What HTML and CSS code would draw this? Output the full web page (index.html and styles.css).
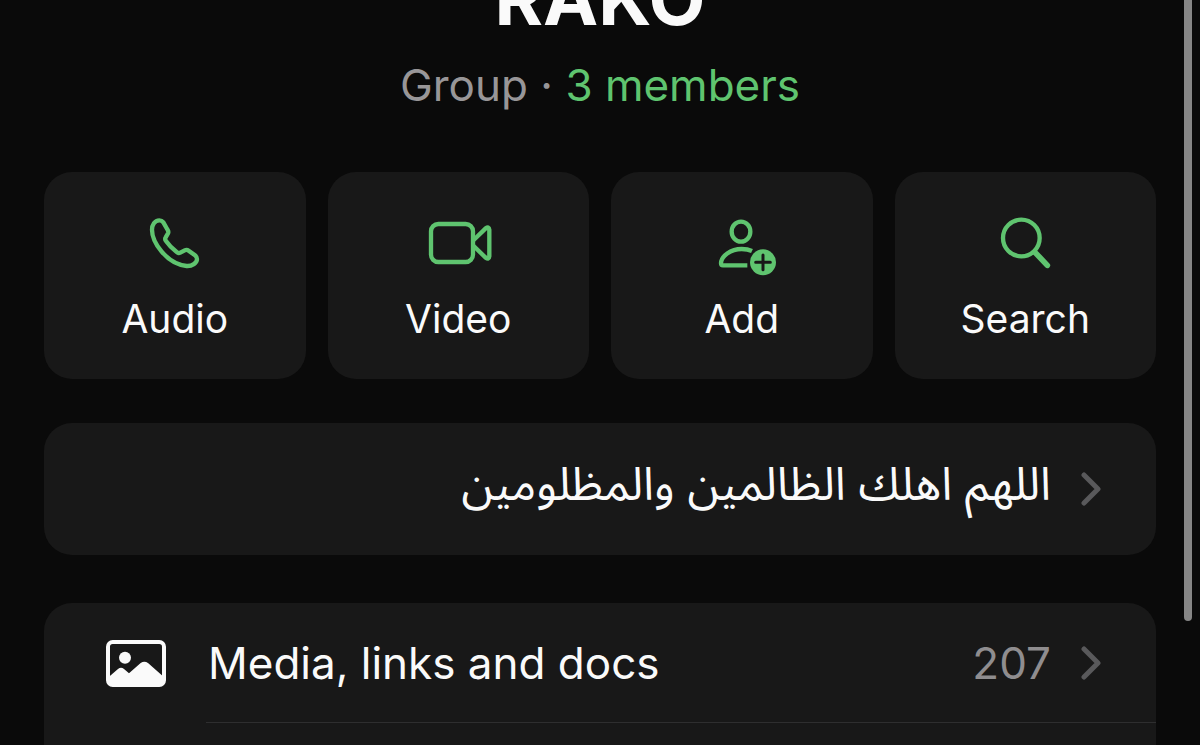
FILE: index.html
```
<!DOCTYPE html>
<html lang="en">
<head>
  <meta charset="UTF-8" />
  <meta name="viewport" content="width=device-width, initial-scale=1" />
  <title>Group Info</title>
  <link rel="stylesheet" href="styles.css">
</head>
<body>

  <main class="page">
    <!-- Group name -->
    <header class="group-header">
      <h1>RAKO</h1>
      <p>Group · <a href="#members">3 members</a></p>
    </header>

    <!-- Quick actions -->
    <div class="actions">
      <button type="button" class="action">
        <svg class="action-icon" viewBox="0 0 216 180" aria-hidden="true">
          <path d="M61 22C47 22 39 36 39 50C39 85 80 152 143 159C159 160 174 150 174 138C174 133 172 130 168 127L149 113C145 110 141 110 137 112L124 119C120 121 116 120 113 117C101 108 90 97 81 84C78 80 78 76 80 73L87 61C89 57 88 54 86 51L73 28C70 24 66 22 61 22Z" />
        </svg>
        <span>Audio</span>
      </button>
      <button type="button" class="action">
        <svg class="action-icon" viewBox="0 0 216 180" aria-hidden="true">
          <rect x="27" y="33" width="126" height="114" rx="22" />
          <path d="M155 81L191 46Q201 39 202 50V130Q201 141 191 134L155 99" />
        </svg>
        <span>Video</span>
      </button>
      <button type="button" class="action">
        <svg class="action-icon" viewBox="0 0 216 180" aria-hidden="true">
          <ellipse cx="105" cy="56" rx="28" ry="30" />
          <path class="butt" d="M138 114Q125 108 107 108C74 108 45 130 45 151Q45 157 51 157H124" />
          <circle class="badge" cx="171" cy="148" r="39" />
          <path class="plus" d="M149 148H193M171 126V170" />
        </svg>
        <span>Add</span>
      </button>
      <button type="button" class="action">
        <svg class="action-icon" viewBox="0 0 216 180" aria-hidden="true">
          <circle cx="97" cy="75" r="55" />
          <path class="handle" d="M138 118L175 157" />
        </svg>
        <span>Search</span>
      </button>
    </div>

    <!-- Description -->
    <a href="#description" class="card row description">
      <span class="row-text" dir="rtl" lang="ar">اللهم اهلك الظالمين والمظلومين</span>
      <svg class="chevron" viewBox="0 0 60 102" aria-hidden="true"><path d="M9 9L51 51L9 93" /></svg>
    </a>

    <!-- Settings list -->
    <div class="card list">
      <a href="#media" class="row media">
        <svg class="row-icon" viewBox="0 0 180 141" aria-hidden="true">
          <rect x="6" y="6" width="168" height="129" rx="14" />
          <circle cx="57" cy="53" r="18" />
          <path d="M9 110L36 87Q45 80 54 87L69 100L104 69Q115 61 126 69L171 109V130H9Z" />
        </svg>
        <span class="row-text">Media, links and docs</span>
        <span class="count">207</span>
        <svg class="chevron" viewBox="0 0 60 102" aria-hidden="true"><path d="M9 9L51 51L9 93" /></svg>
      </a>
    </div>
  </main>

  <div class="scroll-thumb"></div>

</body>
</html>
```

FILE: styles.css
```
/* === Body === */
* {
  box-sizing: border-box;
}

body {
  margin: 0;
  background: #0a0a0a;
  color: #fafafa;
  font-family: Inter, "Noto Sans Arabic", "DejaVu Sans", sans-serif;
  overflow: hidden;
}

a {
  color: inherit;
  text-decoration: none;
}

.page {
  display: flex;
  flex-direction: column;
  height: 100vh;
  padding: 0 44px;
}

/* === Header === */
.group-header {
  margin-top: -46px;
  text-align: center;
}

h1 {
  margin: 0;
  font-size: 74px;
  font-weight: 700;
  line-height: 88px;
}

.group-header p {
  margin: 15px 0 59px;
  color: #989698;
  font-size: 44px;
  line-height: 56px;
}

.group-header a {
  color: #5fc46f;
}

/* === Actions === */
.actions {
  display: grid;
  grid-template-columns: repeat(4, 1fr);
  gap: 22px;
  margin-bottom: 44px;
}

.action {
  display: flex;
  flex-direction: column;
  align-items: center;
  gap: 20px;
  padding: 41px 0 34px;
  border: none;
  border-radius: 28px;
  background: #181818;
  color: inherit;
  font-family: inherit;
  font-size: 39px;
  line-height: 52px;
  cursor: pointer;
}

.action-icon {
  width: 72px;
  height: 60px;
  overflow: visible;
  fill: none;
  stroke: #5fc46f;
  stroke-width: 13;
  stroke-linecap: round;
  stroke-linejoin: round;
}

.action-icon .butt {
  stroke-linecap: butt;
}

.action-icon .badge {
  fill: #5fc46f;
  stroke: none;
}

.action-icon .plus {
  stroke: #181818;
  stroke-width: 9;
}

.action-icon .handle {
  stroke-width: 17;
}

/* === Cards === */
.card {
  border-radius: 28px;
  background: #181818;
}

.row {
  display: flex;
  align-items: center;
  padding: 0 55px 0 62px;
  font-size: 44px;
  line-height: 56px;
}

.row-text {
  flex: 1;
}

.description {
  height: 132px;
  margin-bottom: 48px;
}

.description .row-text {
  padding-bottom: 12px;
  font-size: 46px;
}

.list {
  flex: 1;
  border-radius: 28px 28px 0 0;
}

.media {
  position: relative;
  height: 120px;
}

.media::after {
  content: "";
  position: absolute;
  right: 0;
  bottom: 0;
  left: 162px;
  height: 1px;
  background: #2e2e2f;
}

.row-icon {
  width: 60px;
  height: 47px;
  margin-right: 42px;
  fill: #fafafa;
}

.row-icon rect {
  fill: none;
  stroke: #fafafa;
  stroke-width: 12;
}

.count {
  color: #8f8d8f;
}

.chevron {
  width: 20px;
  height: 34px;
  margin-left: 30px;
  fill: none;
  stroke: #59595b;
  stroke-width: 15;
  stroke-linecap: round;
  stroke-linejoin: round;
}

/* === Scroll indicator === */
.scroll-thumb {
  position: fixed;
  top: -8px;
  right: 8px;
  width: 8px;
  height: 629px;
  border-radius: 4px;
  background: #868686;
}
```
